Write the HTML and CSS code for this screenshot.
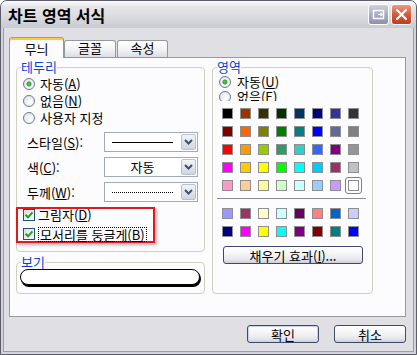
FILE: index.html
```html
<!DOCTYPE html>
<html lang="ko">
<head>
    <meta charset="UTF-8">
    <title>차트 영역 서식</title>
    <link rel="stylesheet" href="styles.css">
</head>
<body>
    <div class="window">
        <div class="titlebar">
            <span class="title">차트 영역 서식</span>
            <div class="title-buttons">
                <span class="tbtn tbtn-help">
                    <svg width="19" height="19" viewBox="0 0 19 19">
                        <rect x="4.5" y="5.5" width="10" height="8" fill="none" stroke="#fff" stroke-width="1.5"/>
                        <path d="M9 9.5h4M11.5 8l1.5 1.5-1.5 1.5" fill="none" stroke="#fff" stroke-width="1.2"/>
                    </svg>
                </span>
                <span class="tbtn tbtn-close">
                    <svg width="19" height="19" viewBox="0 0 19 19">
                        <path d="M5 5l9 9M14 5l-9 9" stroke="#fff" stroke-width="2.2" stroke-linecap="round"/>
                    </svg>
                </span>
            </div>
        </div>

        <div class="client">
            <div class="tabs">
                <div class="tab active">무늬</div>
                <div class="tab">글꼴</div>
                <div class="tab tab-last">속성</div>
            </div>

            <div class="panel">
                <div class="col-left">
                    <fieldset class="group border-group">
                        <legend>테두리</legend>
                        <div class="radios">
                            <label class="radio-row"><span class="radio checked"></span><span>자동(<u>A</u>)</span></label>
                            <label class="radio-row"><span class="radio"></span><span>없음(<u>N</u>)</span></label>
                            <label class="radio-row"><span class="radio"></span><span>사용자 지정</span></label>
                        </div>

                        <div class="field-row first">
                            <span class="field-label">스타일(<u>S</u>):</span>
                            <div class="combo">
                                <div class="combo-value"><span class="line-solid"></span></div>
                                <span class="combo-arrow"><svg width="9" height="6" viewBox="0 0 9 6"><path d="M1 1l3.5 3.5L8 1" fill="none" stroke="#3f4f70" stroke-width="2"/></svg></span>
                            </div>
                        </div>
                        <div class="field-row">
                            <span class="field-label">색(<u>C</u>):</span>
                            <div class="combo">
                                <div class="combo-value">자동</div>
                                <span class="combo-arrow"><svg width="9" height="6" viewBox="0 0 9 6"><path d="M1 1l3.5 3.5L8 1" fill="none" stroke="#3f4f70" stroke-width="2"/></svg></span>
                            </div>
                        </div>
                        <div class="field-row">
                            <span class="field-label">두께(<u>W</u>):</span>
                            <div class="combo">
                                <div class="combo-value"><span class="line-dotted"></span></div>
                                <span class="combo-arrow"><svg width="9" height="6" viewBox="0 0 9 6"><path d="M1 1l3.5 3.5L8 1" fill="none" stroke="#3f4f70" stroke-width="2"/></svg></span>
                            </div>
                        </div>

                        <div class="marked-box">
                            <label class="check-row"><span class="check"><svg width="10" height="10" viewBox="0 0 10 10"><path d="M1.5 4.8l2.5 2.5 4.5-5" fill="none" stroke="#21a121" stroke-width="2"/></svg></span><span>그림자(<u>D</u>)</span></label>
                            <label class="check-row"><span class="check"><svg width="10" height="10" viewBox="0 0 10 10"><path d="M1.5 4.8l2.5 2.5 4.5-5" fill="none" stroke="#21a121" stroke-width="2"/></svg></span><span class="focus">모서리를 둥글게(<u>B</u>)</span></label>
                        </div>
                    </fieldset>

                    <fieldset class="group preview-group">
                        <legend>보기</legend>
                        <div class="preview-pill"></div>
                    </fieldset>
                </div>

                <fieldset class="group area-group">
                    <legend>영역</legend>
                    <div class="area-radios">
                        <label class="radio-row small"><span class="radio checked"></span><span>자동(<u>U</u>)</span></label>
                        <label class="radio-row small"><span class="radio"></span><span>없음(<u>E</u>)</span></label>
                    </div>
                    <div id="basic-colors" class="palette"></div>
                    <div class="sep"></div>
                    <div id="chart-colors" class="palette"></div>
                    <button class="btn fill-btn">채우기 효과(<u>I</u>)...</button>
                </fieldset>
            </div>

            <div class="footer">
                <button class="btn btn-default">확인</button>
                <button class="btn">취소</button>
            </div>
        </div>
    </div>

    <script>
        const basicColors = [
            '#000000', '#993300', '#333300', '#003300', '#003366', '#000080', '#333399', '#333333',
            '#800000', '#FF6600', '#808000', '#008000', '#008080', '#0000FF', '#666699', '#808080',
            '#FF0000', '#FF9900', '#99CC00', '#339966', '#33CCCC', '#3366FF', '#800080', '#969696',
            '#FF00FF', '#FFCC00', '#FFFF00', '#00FF00', '#00FFFF', '#00CCFF', '#993366', '#C0C0C0',
            '#FF99CC', '#FFCC99', '#FFFF99', '#CCFFCC', '#CCFFFF', '#99CCFF', '#CC99FF', '#FFFFFF'
        ];
        const chartColors = [
            '#9999FF', '#993366', '#FFFFCC', '#CCFFFF', '#660066', '#FF8080', '#0066CC', '#CCCCFF',
            '#000080', '#FF00FF', '#FFFF00', '#00FFFF', '#800080', '#800000', '#008080', '#0000FF'
        ];

        function fillPalette(id, colors, selected) {
            const box = document.getElementById(id);
            colors.forEach((color, i) => {
                const swatch = document.createElement('span');
                swatch.classList.add('swatch');
                if (i === selected) swatch.classList.add('selected');
                swatch.style.background = color;
                box.appendChild(swatch);
            });
        }

        fillPalette('basic-colors', basicColors, 39);
        fillPalette('chart-colors', chartColors, -1);
    </script>
</body>
</html>
```

FILE: styles.css
```css
* {
    box-sizing: border-box;
}

body {
    margin: 0;
    font-family: "Noto Sans CJK KR", "Noto Sans", sans-serif;
    font-size: 13px;
    color: #000;
    background: #fff;
}

.window {
    width: 417px;
    height: 355px;
    border: 1px solid #5d5d6c;
    border-radius: 7px 7px 0 0;
    background: #d2d2da;
    display: flex;
    flex-direction: column;
    overflow: hidden;
}

/* title bar */
.titlebar {
    height: 27px;
    flex: none;
    display: flex;
    align-items: center;
    justify-content: space-between;
    padding: 0 4px 0 7px;
    background: linear-gradient(#fbfbfc, #e7e7eb 20%, #d9d9df 60%, #cacad2);
}

.title {
    font-size: 16px;
    font-weight: bold;
    line-height: 18px;
}

.title-buttons {
    display: flex;
    gap: 2px;
}

.tbtn {
    width: 21px;
    height: 21px;
    border: 1px solid #fff;
    border-radius: 3px;
    display: flex;
    align-items: center;
    justify-content: center;
}

.tbtn-help {
    background: linear-gradient(#cdd0de, #a2a6bf 60%, #8c91ad);
}

.tbtn-close {
    background: linear-gradient(#ee9a82, #d9573c 50%, #c63a20);
}

/* client area */
.client {
    flex: 1;
    margin: 0 2px 2px;
    border: 1px solid #9c9caa;
    border-top: none;
    background: #e0dfe3;
    padding: 9px 0 0 5px;
}

.tabs {
    display: flex;
    align-items: flex-end;
    height: 20px;
}

.tab {
    width: 52px;
    height: 17px;
    margin-left: 0;
    border: 1px solid #919b9c;
    border-bottom: none;
    border-radius: 3px 3px 0 0;
    background: linear-gradient(#ffffff, #f4f4f7 50%, #dcdce5);
    text-align: center;
    line-height: 14px;
}

.tab-last {
    width: 51px;
    margin-left: 1px;
}

.tab.active {
    width: 55px;
    height: 21px;
    margin-bottom: -1px;
    border-top: 1px solid #e68b2c;
    box-shadow: inset 0 2px 0 #ffc73c;
    background: #fcfcfe;
    padding-top: 3px;
    line-height: 16px;
    position: relative;
    z-index: 1;
}

.panel {
    width: 397px;
    height: 260px;
    border: 1px solid #919b9c;
    background: #fcfcfe;
    display: flex;
    gap: 7px;
    padding: 2px 0 0 6px;
}

.col-left {
    width: 189px;
    display: flex;
    flex-direction: column;
    gap: 3px;
}

fieldset.group {
    margin: 0;
    padding: 0 4px;
    border: 1px solid #d0d0bf;
    border-radius: 4px;
    min-width: 0;
}

legend {
    padding: 0;
    color: #0046d5;
    font-size: 13px;
    line-height: 14px;
}

.border-group {
    height: 192px;
}

.preview-group {
    height: 39px;
    padding-top: 3px;
}

.area-group {
    width: 161px;
    height: 234px;
}

/* radios */
.radios {
    margin-top: 1px;
}

.radio-row {
    display: flex;
    align-items: center;
    height: 17px;
    padding-left: 2px;
    gap: 5px;
    line-height: 15px;
    white-space: nowrap;
}

.radio-row.small {
    height: 15px;
    gap: 6px;
}

.radio {
    width: 12px;
    height: 12px;
    flex: none;
    border: 1px solid #6a7890;
    border-radius: 50%;
    background: radial-gradient(circle at 65% 65%, #ffffff, #dcdde6);
}

.radio.checked {
    background: radial-gradient(circle, #5fd05f 0, #2ea52e 2px, transparent 3px),
        radial-gradient(circle at 65% 65%, #ffffff, #dcdde6);
}

.area-radios {
    height: 27px;
    overflow: hidden;
}

/* combos */
.field-row {
    display: flex;
    align-items: center;
    height: 20px;
    margin-top: 5px;
}

.field-row.first {
    margin-top: 6px;
}

.field-label {
    width: 83px;
    padding-left: 6px;
    white-space: nowrap;
}

.combo {
    width: 94px;
    height: 20px;
    border: 1px solid #a2aab8;
    background: #fff;
    display: flex;
}

.combo-value {
    flex: 1;
    display: flex;
    align-items: center;
    justify-content: center;
    line-height: 16px;
}

.line-solid {
    width: 61px;
    height: 1px;
    background: #000;
}

.line-dotted {
    width: 61px;
    border-top: 1px dotted #000;
}

.combo-arrow {
    width: 15px;
    margin: 1px;
    border: 1px solid #b9c0cf;
    border-radius: 2px;
    background: linear-gradient(#f3f4f8, #d2d5e1);
    display: flex;
    align-items: center;
    justify-content: center;
}

/* highlighted checkbox group */
.marked-box {
    width: 139px;
    height: 36px;
    margin: 5px 0 0 -5px;
    padding-left: 5px;
    border: 2px solid #dc1c1c;
    box-shadow: 2px 2px 3px rgba(0, 0, 0, 0.3);
    display: flex;
    flex-direction: column;
    gap: 7px;
}

.check-row {
    display: flex;
    align-items: center;
    height: 12px;
    line-height: 12px;
    white-space: nowrap;
}

.check {
    width: 12px;
    height: 12px;
    flex: none;
    margin-right: 3px;
    border: 1px solid #1c5180;
    background: linear-gradient(135deg, #dcdcd7, #ffffff);
    display: flex;
    align-items: center;
    justify-content: center;
}

.focus {
    border: 1px dotted #000;
    padding: 0 1px;
    line-height: 13px;
}

/* preview */
.preview-pill {
    width: 180px;
    height: 16px;
    margin-left: -1px;
    border: 1px solid #000;
    border-radius: 8px;
    background: #fff;
    box-shadow: 1px 2px 0 #000;
}

/* palette */
.palette {
    display: grid;
    grid-template-columns: repeat(8, 11px);
    gap: 7px;
    margin-left: 5px;
}

.area-radios + .palette {
    margin-top: 7px;
}

.swatch {
    width: 11px;
    height: 11px;
    border: 1px solid #8f8f8f;
}

.swatch.selected {
    position: relative;
}

.swatch.selected::after {
    content: "";
    position: absolute;
    inset: -4px;
    border: 1px solid #808080;
    border-radius: 3px;
}

.sep {
    width: 149px;
    height: 1px;
    background: #8b8b8b;
    margin: 7px 0 9px;
}

/* buttons */
.btn {
    font-family: inherit;
    font-size: 13px;
    color: #000;
    padding: 0;
    height: 18px;
    line-height: 15px;
    border: 1px solid #3d4a6e;
    border-radius: 3px;
    background: linear-gradient(#ffffff, #f5f5f7 45%, #e5e5ec 80%, #cbcdda);
}

.btn-default {
    box-shadow: inset 0 0 0 1px #c6d3ef;
}

.fill-btn {
    width: 140px;
    margin: 9px 0 0 6px;
}

.footer {
    width: 397px;
    display: flex;
    justify-content: flex-end;
    gap: 15px;
    margin-top: 8px;
}

.footer .btn {
    width: 72px;
}
```
